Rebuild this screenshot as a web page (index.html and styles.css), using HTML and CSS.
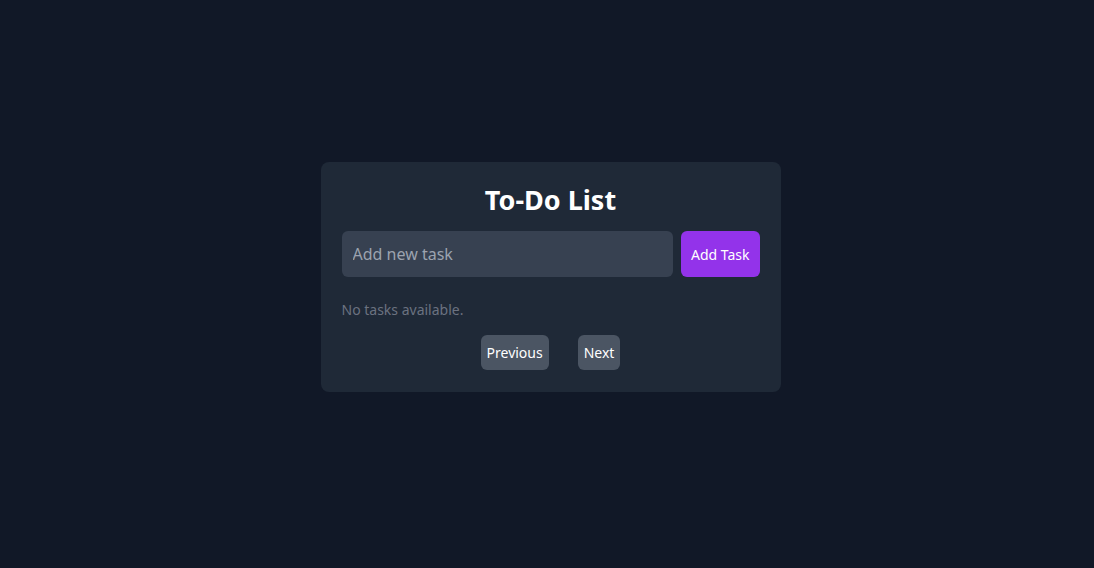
FILE: index.html
```html
<!DOCTYPE html>
<html lang="en">
<head>
<meta charset="utf-8">
<title>To-Do List</title>
<link rel="stylesheet" href="styles.css">
</head>
<body>
<main class="page">
  <section class="card">
    <h1 class="title">To-Do List</h1>
    <div class="add-row">
      <input class="task-input" type="text" placeholder="Add new task">
      <button class="add-btn">Add Task</button>
    </div>
    <p class="empty">No tasks available.</p>
    <div class="pager">
      <button class="pager-btn">Previous</button>
      <button class="pager-btn">Next</button>
    </div>
  </section>
</main>
</body>
</html>
```

FILE: styles.css
```css
* { box-sizing: border-box; }
html, body { margin: 0; padding: 0; }
body {
  background: #111827;
  font-family: "Noto Sans", "Open Sans", sans-serif;
  color: #f3f4f6;
}
.page {
  min-height: 100vh;
  display: flex;
  align-items: center;
  justify-content: center;
  padding: 0 0 14px 7px;
}
.card {
  width: 460px;
  background: #1f2937;
  border-radius: 8px;
  padding: 20px 21px 22px;
}
.title {
  margin: 0 0 13px;
  text-align: center;
  font-size: 27px;
  line-height: 36px;
  font-weight: 700;
  color: #ffffff;
}
.add-row {
  display: flex;
  gap: 8px;
}
.task-input {
  flex: 1;
  min-width: 0;
  height: 46px;
  border: none;
  outline: none;
  border-radius: 6px;
  background: #374151;
  color: #f3f4f6;
  padding: 0 11px;
  font-family: inherit;
  font-size: 16px;
}
.task-input::placeholder { color: #9ca3af; }
.add-btn {
  height: 46px;
  border: none;
  border-radius: 6px;
  background: #9333ea;
  color: #ffffff;
  padding: 0 10px;
  font-family: inherit;
  font-size: 14px;
}
.empty {
  margin: 23px 0 0;
  font-size: 14px;
  line-height: 20px;
  color: #6b7280;
}
.pager {
  margin-top: 15px;
  display: flex;
  justify-content: center;
  gap: 29px;
}
.pager-btn {
  height: 35px;
  border: none;
  border-radius: 6px;
  background: #4b5563;
  color: #ffffff;
  padding: 0 6px;
  font-family: inherit;
  font-size: 14px;
}
```
